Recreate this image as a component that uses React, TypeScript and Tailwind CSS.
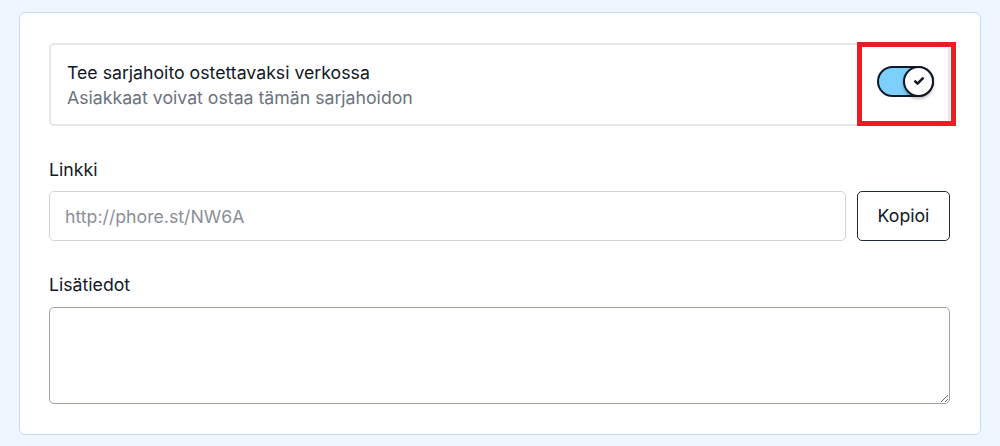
import { useState } from 'react'

function Toggle({ checked, onChange }: { checked: boolean; onChange: (v: boolean) => void }) {
  return (
    <button
      type="button"
      role="switch"
      aria-checked={checked}
      onClick={() => onChange(!checked)}
      className={`relative flex h-[31px] w-[57px] items-center rounded-full border-2 border-[#111827] ${
        checked ? 'bg-[#7dd0fc]' : 'bg-gray-200'
      }`}
    >
      <span
        className={`absolute top-[-2px] flex h-[31px] w-[31px] items-center justify-center rounded-full border-2 border-[#111827] bg-white shadow-[0_2px_3px_rgba(0,0,0,0.25)] ${
          checked ? 'right-[-2px]' : 'left-[-2px]'
        }`}
      >
        {checked && (
          <svg viewBox="0 0 16 16" className="h-[12px] w-[12px]" fill="none">
            <path d="M3 8.5l3 3 7-7" stroke="#111827" strokeWidth="3.4" strokeLinecap="round" strokeLinejoin="round" />
          </svg>
        )}
      </span>
    </button>
  )
}

export default function App() {
  const [online, setOnline] = useState(true)

  return (
    <div
      className="min-h-[446px] bg-[#eff6ff] px-[19px] pt-[12px] text-[17.7px] text-[#111827]"
      style={{ fontFamily: 'Inter, "Noto Sans", sans-serif' }}
    >
      <div className="rounded-md border border-[#bfdbfe] bg-white pl-[29px] pr-[30px] pt-[30px] pb-[30px]">
        <div className="relative flex h-[83px] items-center rounded-[5px] border-2 border-[#e5e7eb] pl-[16px] pr-[12px]">
          <div className="mt-[1px] flex-1 leading-[25px]">
            <div>Tee sarjahoito ostettavaksi verkossa</div>
            <div className="text-[#6b7280]">Asiakkaat voivat ostaa tämän sarjahoidon</div>
          </div>
          <div className="mr-[2px] mt-[-7px]">
            <Toggle checked={online} onChange={setOnline} />
          </div>
          <div className="pointer-events-none absolute top-[-3px] right-[-8px] h-[84px] w-[99px] border-[5px] border-[#ec1c24]" />
        </div>

        <label className="mt-[32px] block leading-[24px]">Linkki</label>
        <div className="mt-[9px] flex gap-[11px]">
          <input
            readOnly
            placeholder="http://phore.st/NW6A"
            className="h-[50px] flex-1 rounded-[5px] border border-[#d1d5db] px-[15px] text-[17.7px] outline-none placeholder:text-[#8a8f98]"
          />
          <button
            type="button"
            className="h-[50px] w-[93px] rounded-[5px] border-[1.5px] border-[#1f2937] bg-white text-[17.7px]"
          >
            Kopioi
          </button>
        </div>

        <label className="mt-[32px] block leading-[24px]">Lisätiedot</label>
        <textarea className="mt-[10px] block h-[97px] w-full rounded-[5px] border border-[#9ca3af] px-[15px] py-[10px] text-[17.7px] outline-none" />
      </div>
    </div>
  )
}
